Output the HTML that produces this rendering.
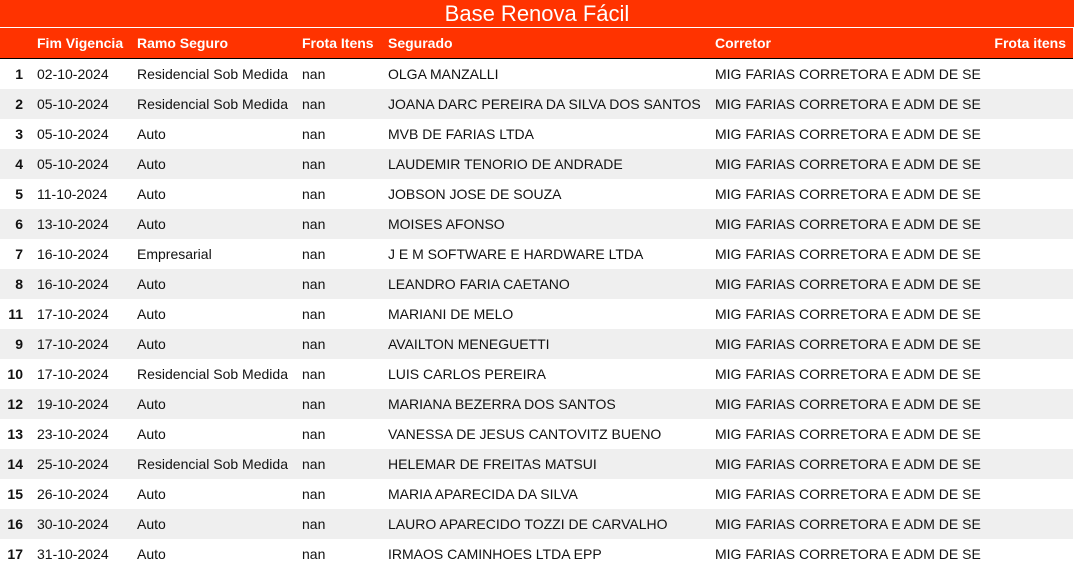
<!DOCTYPE html>
<html><head><meta charset="utf-8"><style>
body{margin:0;width:1074px;height:570px;overflow:hidden;background:#fff;font-family:"Liberation Sans",Arial,sans-serif;}
.t{height:27px;background:#ff3300;color:#fff;font-size:22px;text-align:center;line-height:27px;border-bottom:1px solid #fff;}
table{border-collapse:collapse;width:1073px;font-size:14px;table-layout:fixed}
th{background:#ff3300;color:#fff;font-weight:bold;text-align:left;height:30px;padding:0;border-bottom:1px solid #000;white-space:nowrap;overflow:visible}
td{height:30px;padding:0;color:#111;white-space:nowrap;overflow:visible}
tbody tr:nth-child(even) td{background:#efefef}
td.i{text-align:right;font-weight:bold;padding-right:14px}
th.r{text-align:right;padding-right:7px}
</style></head><body>
<div class="t">Base Renova Fácil</div>
<table>
<colgroup><col style="width:37px"><col style="width:100px"><col style="width:165px"><col style="width:86px"><col style="width:327px"><col style="width:250px"><col></colgroup>
<thead><tr><th></th><th>Fim Vigencia</th><th>Ramo Seguro</th><th>Frota Itens</th><th>Segurado</th><th>Corretor</th><th class="r">Frota itens</th></tr></thead>
<tbody>
<tr><td class="i">1</td><td>02-10-2024</td><td>Residencial Sob Medida</td><td>nan</td><td>OLGA MANZALLI</td><td>MIG FARIAS CORRETORA E ADM DE SE</td><td></td></tr>
<tr><td class="i">2</td><td>05-10-2024</td><td>Residencial Sob Medida</td><td>nan</td><td>JOANA DARC PEREIRA DA SILVA DOS SANTOS</td><td>MIG FARIAS CORRETORA E ADM DE SE</td><td></td></tr>
<tr><td class="i">3</td><td>05-10-2024</td><td>Auto</td><td>nan</td><td>MVB DE FARIAS LTDA</td><td>MIG FARIAS CORRETORA E ADM DE SE</td><td></td></tr>
<tr><td class="i">4</td><td>05-10-2024</td><td>Auto</td><td>nan</td><td>LAUDEMIR TENORIO DE ANDRADE</td><td>MIG FARIAS CORRETORA E ADM DE SE</td><td></td></tr>
<tr><td class="i">5</td><td>11-10-2024</td><td>Auto</td><td>nan</td><td>JOBSON JOSE DE SOUZA</td><td>MIG FARIAS CORRETORA E ADM DE SE</td><td></td></tr>
<tr><td class="i">6</td><td>13-10-2024</td><td>Auto</td><td>nan</td><td>MOISES AFONSO</td><td>MIG FARIAS CORRETORA E ADM DE SE</td><td></td></tr>
<tr><td class="i">7</td><td>16-10-2024</td><td>Empresarial</td><td>nan</td><td>J E M SOFTWARE E HARDWARE LTDA</td><td>MIG FARIAS CORRETORA E ADM DE SE</td><td></td></tr>
<tr><td class="i">8</td><td>16-10-2024</td><td>Auto</td><td>nan</td><td>LEANDRO FARIA CAETANO</td><td>MIG FARIAS CORRETORA E ADM DE SE</td><td></td></tr>
<tr><td class="i">11</td><td>17-10-2024</td><td>Auto</td><td>nan</td><td>MARIANI DE MELO</td><td>MIG FARIAS CORRETORA E ADM DE SE</td><td></td></tr>
<tr><td class="i">9</td><td>17-10-2024</td><td>Auto</td><td>nan</td><td>AVAILTON MENEGUETTI</td><td>MIG FARIAS CORRETORA E ADM DE SE</td><td></td></tr>
<tr><td class="i">10</td><td>17-10-2024</td><td>Residencial Sob Medida</td><td>nan</td><td>LUIS CARLOS PEREIRA</td><td>MIG FARIAS CORRETORA E ADM DE SE</td><td></td></tr>
<tr><td class="i">12</td><td>19-10-2024</td><td>Auto</td><td>nan</td><td>MARIANA BEZERRA DOS SANTOS</td><td>MIG FARIAS CORRETORA E ADM DE SE</td><td></td></tr>
<tr><td class="i">13</td><td>23-10-2024</td><td>Auto</td><td>nan</td><td>VANESSA DE JESUS CANTOVITZ BUENO</td><td>MIG FARIAS CORRETORA E ADM DE SE</td><td></td></tr>
<tr><td class="i">14</td><td>25-10-2024</td><td>Residencial Sob Medida</td><td>nan</td><td>HELEMAR DE FREITAS MATSUI</td><td>MIG FARIAS CORRETORA E ADM DE SE</td><td></td></tr>
<tr><td class="i">15</td><td>26-10-2024</td><td>Auto</td><td>nan</td><td>MARIA APARECIDA DA SILVA</td><td>MIG FARIAS CORRETORA E ADM DE SE</td><td></td></tr>
<tr><td class="i">16</td><td>30-10-2024</td><td>Auto</td><td>nan</td><td>LAURO APARECIDO TOZZI DE CARVALHO</td><td>MIG FARIAS CORRETORA E ADM DE SE</td><td></td></tr>
<tr><td class="i">17</td><td>31-10-2024</td><td>Auto</td><td>nan</td><td>IRMAOS CAMINHOES LTDA EPP</td><td>MIG FARIAS CORRETORA E ADM DE SE</td><td></td></tr>
</tbody></table>
</body></html>
